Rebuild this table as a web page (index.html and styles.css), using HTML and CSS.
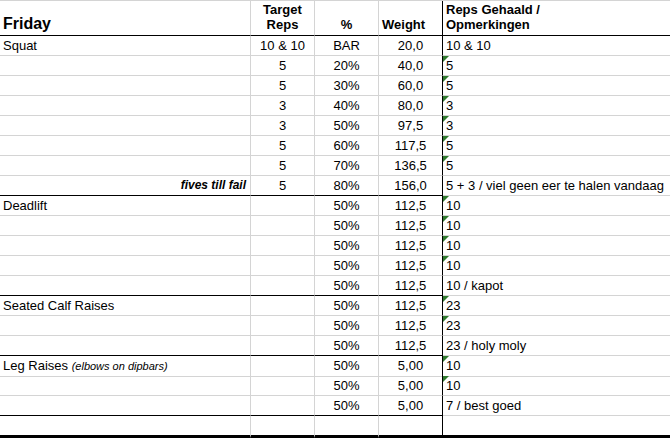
FILE: index.html
```html
<!DOCTYPE html>
<html>
<head>
<meta charset="utf-8">
<link rel="stylesheet" href="styles.css">
</head>
<body>
<div class="sheet">
  <div class="row head">
    <div class="c a title">Friday</div>
    <div class="c b">Target<br>Reps</div>
    <div class="c cc">%</div>
    <div class="c d left">Weight</div>
    <div class="c e">Reps Gehaald /<br>Opmerkingen</div>
  </div>

  <div class="row"><div class="c a">Squat</div><div class="c b">10 &amp; 10</div><div class="c cc">BAR</div><div class="c d">20,0</div><div class="c e">10 &amp; 10</div></div>
  <div class="row"><div class="c a"></div><div class="c b">5</div><div class="c cc">20%</div><div class="c d">40,0</div><div class="c e tri">5</div></div>
  <div class="row"><div class="c a"></div><div class="c b">5</div><div class="c cc">30%</div><div class="c d">60,0</div><div class="c e tri">5</div></div>
  <div class="row"><div class="c a"></div><div class="c b">3</div><div class="c cc">40%</div><div class="c d">80,0</div><div class="c e tri">3</div></div>
  <div class="row"><div class="c a"></div><div class="c b">3</div><div class="c cc">50%</div><div class="c d">97,5</div><div class="c e tri">3</div></div>
  <div class="row"><div class="c a"></div><div class="c b">5</div><div class="c cc">60%</div><div class="c d">117,5</div><div class="c e tri">5</div></div>
  <div class="row"><div class="c a"></div><div class="c b">5</div><div class="c cc">70%</div><div class="c d">136,5</div><div class="c e tri">5</div></div>
  <div class="row sep"><div class="c a note">fives till fail</div><div class="c b">5</div><div class="c cc">80%</div><div class="c d">156,0</div><div class="c e">5 + 3 / viel geen eer te halen vandaag</div></div>

  <div class="row"><div class="c a">Deadlift</div><div class="c b"></div><div class="c cc">50%</div><div class="c d">112,5</div><div class="c e tri">10</div></div>
  <div class="row"><div class="c a"></div><div class="c b"></div><div class="c cc">50%</div><div class="c d">112,5</div><div class="c e tri">10</div></div>
  <div class="row"><div class="c a"></div><div class="c b"></div><div class="c cc">50%</div><div class="c d">112,5</div><div class="c e tri">10</div></div>
  <div class="row"><div class="c a"></div><div class="c b"></div><div class="c cc">50%</div><div class="c d">112,5</div><div class="c e tri">10</div></div>
  <div class="row sep"><div class="c a"></div><div class="c b"></div><div class="c cc">50%</div><div class="c d">112,5</div><div class="c e">10 / kapot</div></div>

  <div class="row"><div class="c a">Seated Calf Raises</div><div class="c b"></div><div class="c cc">50%</div><div class="c d">112,5</div><div class="c e tri">23</div></div>
  <div class="row"><div class="c a"></div><div class="c b"></div><div class="c cc">50%</div><div class="c d">112,5</div><div class="c e tri">23</div></div>
  <div class="row sep"><div class="c a"></div><div class="c b"></div><div class="c cc">50%</div><div class="c d">112,5</div><div class="c e">23 / holy moly</div></div>

  <div class="row"><div class="c a">Leg Raises <span class="aside">(elbows on dipbars)</span></div><div class="c b"></div><div class="c cc">50%</div><div class="c d">5,00</div><div class="c e tri">10</div></div>
  <div class="row"><div class="c a"></div><div class="c b"></div><div class="c cc">50%</div><div class="c d">5,00</div><div class="c e tri">10</div></div>
  <div class="row sep"><div class="c a"></div><div class="c b"></div><div class="c cc">50%</div><div class="c d">5,00</div><div class="c e">7 / best goed</div></div>

  <div class="row last"><div class="c a"></div><div class="c b"></div><div class="c cc"></div><div class="c d"></div><div class="c e"></div></div>
</div>
</body>
</html>
```

FILE: styles.css
```css
html, body {
  margin: 0;
  padding: 0;
  background: #ffffff;
}

body {
  font-family: "Liberation Sans", Arial, sans-serif;
  font-size: 13px;
  color: #000000;
  overflow: hidden;
}

.sheet {
  width: 670px;
  border-top: 1px solid #d4d4d4;
}

.row {
  display: grid;
  grid-template-columns: 251px 64px 64px 64px 227px;
  height: 20px;
}

.c {
  box-sizing: border-box;
  border-bottom: 1px solid #d4d4d4;
  border-right: 1px solid #d4d4d4;
  line-height: 19px;
  white-space: nowrap;
  overflow: visible;
  position: relative;
}

.a { padding-left: 3px; }
.b, .cc, .d { text-align: center; }
.d { border-right-color: #000000; }
.e { border-right: none; padding-left: 3px; }

.row.sep .a,
.row.sep .b,
.row.sep .cc,
.row.sep .d {
  border-bottom-color: #000000;
}

.row.head {
  height: 35px;
}

.row.head .c {
  border-bottom-color: #000000;
  font-weight: bold;
  line-height: 15px;
  display: flex;
  flex-direction: column;
  justify-content: flex-end;
  padding-bottom: 3px;
}

.row.head .b,
.row.head .cc {
  align-items: center;
}

.row.head .d.left {
  text-align: left;
  padding-left: 3px;
}

.row.head .title {
  font-size: 16px;
  line-height: 18px;
  padding-bottom: 2px;
}

.row.last {
  height: 22px;
}

.row.last .c {
  border-bottom: 3px solid #000000;
}

.note {
  text-align: right;
  padding-right: 4px;
  font-size: 12px;
  font-weight: bold;
  font-style: italic;
}

.aside {
  font-size: 11px;
  font-style: italic;
}

.tri::before {
  content: "";
  position: absolute;
  left: 0;
  top: 0;
  width: 0;
  height: 0;
  border-top: 6px solid #2f7a2f;
  border-right: 6px solid transparent;
}
```
